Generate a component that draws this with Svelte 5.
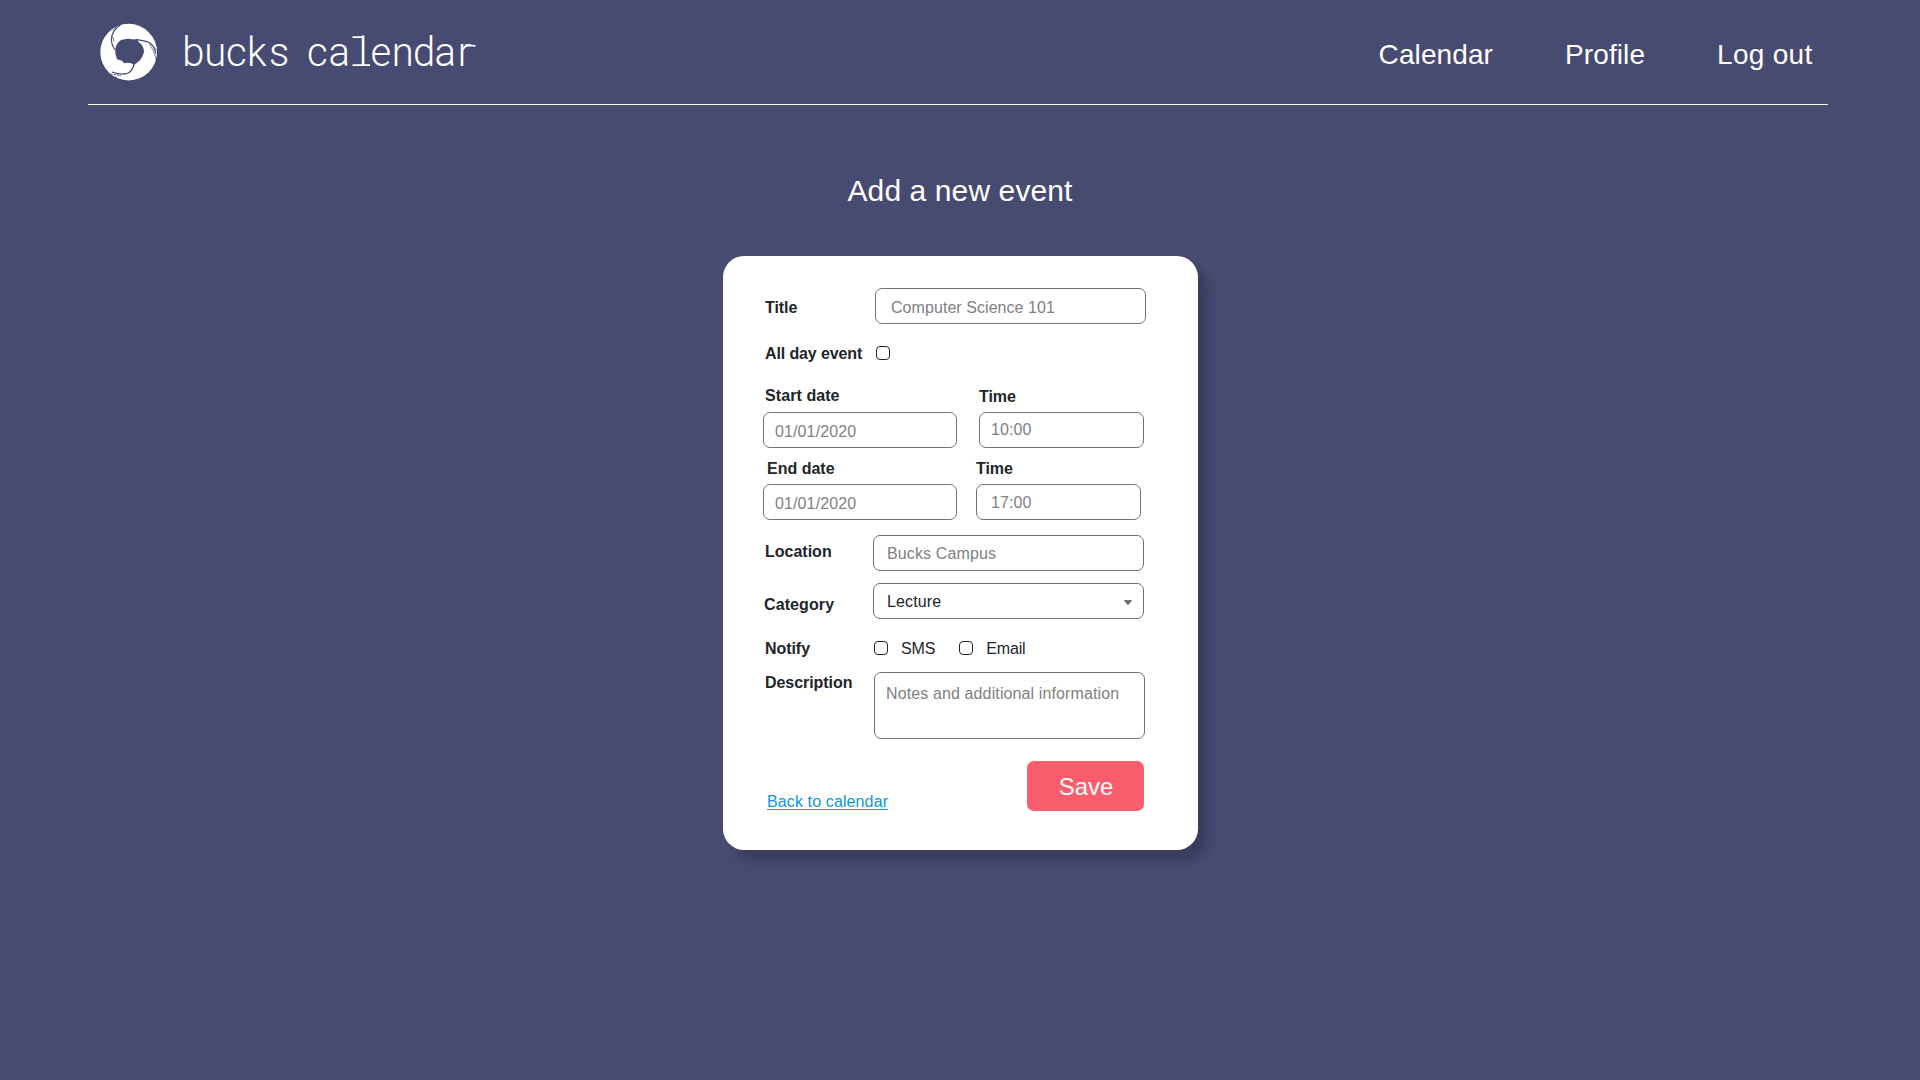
<script>
  const nav = ['Calendar', 'Profile', 'Log out'];
  const wordmark = '2.2 24.3 46 66.9 88.9 108 127 148.4 178.4 190.5 211.7 233 254.4 277.7';
</script>

<div class="page">
  <header>
    <a class="brand" href="#home" aria-label="bucks calendar">
      <svg class="logo" viewBox="58 40 174 174">
        <circle cx="144" cy="127.500" r="85" fill="#fff" />
        <path class="cut" d="M104 118Q107 100 121 91L140 87L171 90L174 98Q190 108 190 127Q184 150 168 160L160 166L150 160L138 159L130 161L124 153L109 149Q102 134 104 118Z" />
        <path class="gap" d="M103 121Q92 104 92 88Q94 62 119 46" stroke-width="3.500" />
        <path class="gap" d="M100 96L96 80M96 63L108 51" stroke-width="2.500" />
        <path class="gap" d="M164 89Q194 93 205 98Q220 108 226 132" stroke-width="3.500" />
        <path class="gap" d="M205 102Q220 120 226 146M216 106L228 122" stroke-width="2" />
        <path class="gap" d="M160 164Q156 182 143 190Q122 198 94 187" stroke-width="4" />
        <path class="gap" d="M89 194L103 195L121 199M92 201L109 203" stroke-width="2.500" stroke-dasharray="7 3" />
        <path class="gap" d="M99 48L92 54M225 151L230 141" stroke-width="3" />
      </svg>
      <svg class="wordmark" viewBox="0 0 300 50">
        <text x={wordmark} y="40">bucks calendar</text>
        <path d="M172.500 11.200H182M172.500 39.100H190" />
        <path d="M285 19.500Q290 19 295.500 19.900" />
      </svg>
    </a>
    <nav>
      {#each nav as item}
        <a href="#{item}">{item}</a>
      {/each}
    </nav>
  </header>

  <h1>Add a new event</h1>

  <form>
    <div class="row title">
      <span class="label">Title</span>
      <div class="field wide">Computer Science 101</div>
    </div>
    <div class="row allday">
      <span class="label">All day event</span>
      <i class="check"></i>
    </div>
    <div class="row dates">
      <div class="col date">
        <span class="label">Start date</span>
        <div class="field">01/01/2020</div>
      </div>
      <div class="col time">
        <span class="label">Time</span>
        <div class="field">10:00</div>
      </div>
    </div>
    <div class="row dates end">
      <div class="col date">
        <span class="label">End date</span>
        <div class="field">01/01/2020</div>
      </div>
      <div class="col time">
        <span class="label">Time</span>
        <div class="field">17:00</div>
      </div>
    </div>
    <div class="row location">
      <span class="label">Location</span>
      <div class="field wide">Bucks Campus</div>
    </div>
    <div class="row category">
      <span class="label">Category</span>
      <div class="field wide select">
        Lecture
        <svg viewBox="0 0 8 5"><path d="M.8 0H7.200Q8.300.300 7.500 1.300L4.800 4.400Q4 5 3.200 4.400L.5 1.300Q-.3.300.8 0Z" fill="#707070" /></svg>
      </div>
    </div>
    <div class="row notify">
      <span class="label">Notify</span>
      <i class="check"></i><span class="option">SMS</span>
      <i class="check second"></i><span class="option">Email</span>
    </div>
    <div class="row description">
      <span class="label">Description</span>
      <div class="field wide area">Notes and additional information</div>
    </div>
    <div class="row actions">
      <a href="#calendar">Back to calendar</a>
      <button type="button">Save</button>
    </div>
  </form>
</div>

<style>
  :global(body) { background: #474b72; }
  .page {
    box-sizing: border-box;
    width: 1920px;
    height: 1080px;
    overflow: hidden;
    background: #474b72;
    font-family: "Liberation Sans", Arial, sans-serif;
    color: #fff;
    display: flex;
    flex-direction: column;
    align-items: center;
  }
  header {
    box-sizing: border-box;
    width: 1740px;
    height: 105px;
    margin-right: 4px;
    padding: 0 15.500px 0 12px;
    border-bottom: 1px solid #fff;
    display: flex;
    justify-content: space-between;
    align-items: flex-start;
  }
  .brand { display: flex; color: #fff; }
  .logo { width: 58px; height: 58px; margin-top: 23px; }
  .cut { fill: #474b72; }
  .gap { fill: none; stroke: #474b72; stroke-linejoin: round; }
  .wordmark { width: 300px; height: 50px; margin: 26px 0 0 22px; overflow: visible; }
  .wordmark text { font: 300 40px Roboto, sans-serif; fill: #fff; }
  .wordmark path { fill: none; stroke: #fff; stroke-width: 1.800; }
  nav { display: flex; gap: 72px; margin-top: 39px; }
  nav a { color: #fff; text-decoration: none; font-size: 28px; line-height: 32px; letter-spacing: 0.100px; }
  nav a:last-child { letter-spacing: 0.280px; }
  h1 { margin: 69px 0 0; font-size: 30px; line-height: 34px; font-weight: 400; letter-spacing: 0.100px; }
  form {
    box-sizing: border-box;
    width: 475px;
    height: 594px;
    margin: 48px 0 0 1px;
    padding: 32px 52px 0 40px;
    border-radius: 21px;
    background: #fff;
    box-shadow: 10px 10px 10px rgba(0, 0, 0, 0.200);
    color: #212529;
    font-size: 16px;
    line-height: 18px;
  }
  .row { display: flex; align-items: flex-start; }
  .label { font-weight: 700; letter-spacing: -0.060px; white-space: nowrap; }
  .row > .label { width: 108px; padding-left: 2px; box-sizing: border-box; }
  .field {
    box-sizing: border-box;
    height: 36px;
    border: 1px solid #707070;
    border-radius: 7px;
    color: #808080;
    letter-spacing: 0.120px;
    padding: 9px 0 0 13px;
    white-space: nowrap;
  }
  .wide { width: 271px; margin-left: 2px; }
  .check {
    box-sizing: border-box;
    width: 14px;
    height: 14px;
    border: 1px solid #212529;
    border-radius: 4px;
  }
  .title .label { padding-top: 11px; }
  .title .field { margin-left: 4px; padding: 10px 0 0 15px; letter-spacing: 0.060px; }
  .allday { margin-top: 20px; height: 18px; }
  .allday .label { padding-top: 1px; letter-spacing: -0.120px; }
  .allday .check { margin: 2px 0 0 5px; }
  .dates { margin-top: 24px; height: 62px; }
  .col { display: flex; flex-direction: column; }
  .col .label { box-sizing: border-box; }
  .date { width: 194px; }
  .date .label { margin-left: 2px; padding-top: 1px; height: 26px; letter-spacing: 0.080px; }
  .date .field { padding: 10px 0 0 11px; }
  .time { width: 165px; margin-left: 22px; }
  .time .label { padding-top: 2px; height: 26px; }
  .time .field { padding: 8px 0 0 11px; }
  .end { margin-top: 11px; height: 61px; }
  .end .date .label { margin-left: 4px; height: 25px; letter-spacing: 0; }
  .end .time { margin-left: 19px; }
  .end .time .label { padding-top: 1px; height: 25px; }
  .end .time .field { padding: 9px 0 0 14px; }
  .location { margin-top: 15px; }
  .location .label { padding-top: 8px; letter-spacing: 0; }
  .category { margin-top: 12px; }
  .category .label { padding: 13px 0 0 1px; letter-spacing: 0.100px; }
  .select { display: flex; justify-content: space-between; color: #212529; padding-right: 11px; }
  .select svg { width: 8px; height: 5px; margin-top: 7px; }
  .notify { margin-top: 20px; height: 18px; }
  .notify .label, .option { padding-top: 1px; }
  .notify .check { margin: 2px 0 0 3px; }
  .option { margin-left: 13px; letter-spacing: -0.150px; }
  .notify .check.second { margin-left: 24px; }
  .description { margin-top: 15px; }
  .description .label { padding-top: 2px; }
  .area { margin-left: 3px; height: 67px; padding: 12px 0 0 11px; }
  .actions { margin-top: 22px; justify-content: space-between; padding: 0 2px 0 4px; }
  .actions a { margin-top: 32px; color: #0e96d8; letter-spacing: 0.120px; text-underline-offset: 2px; text-decoration-thickness: 1px; }
  button {
    width: 117px;
    height: 50px;
    padding: 2px 0 0 1px;
    border: 0;
    border-radius: 7px;
    background: #fa5d6b;
    color: #fff;
    font: 24px "Liberation Sans", Arial, sans-serif;
  }
</style>
